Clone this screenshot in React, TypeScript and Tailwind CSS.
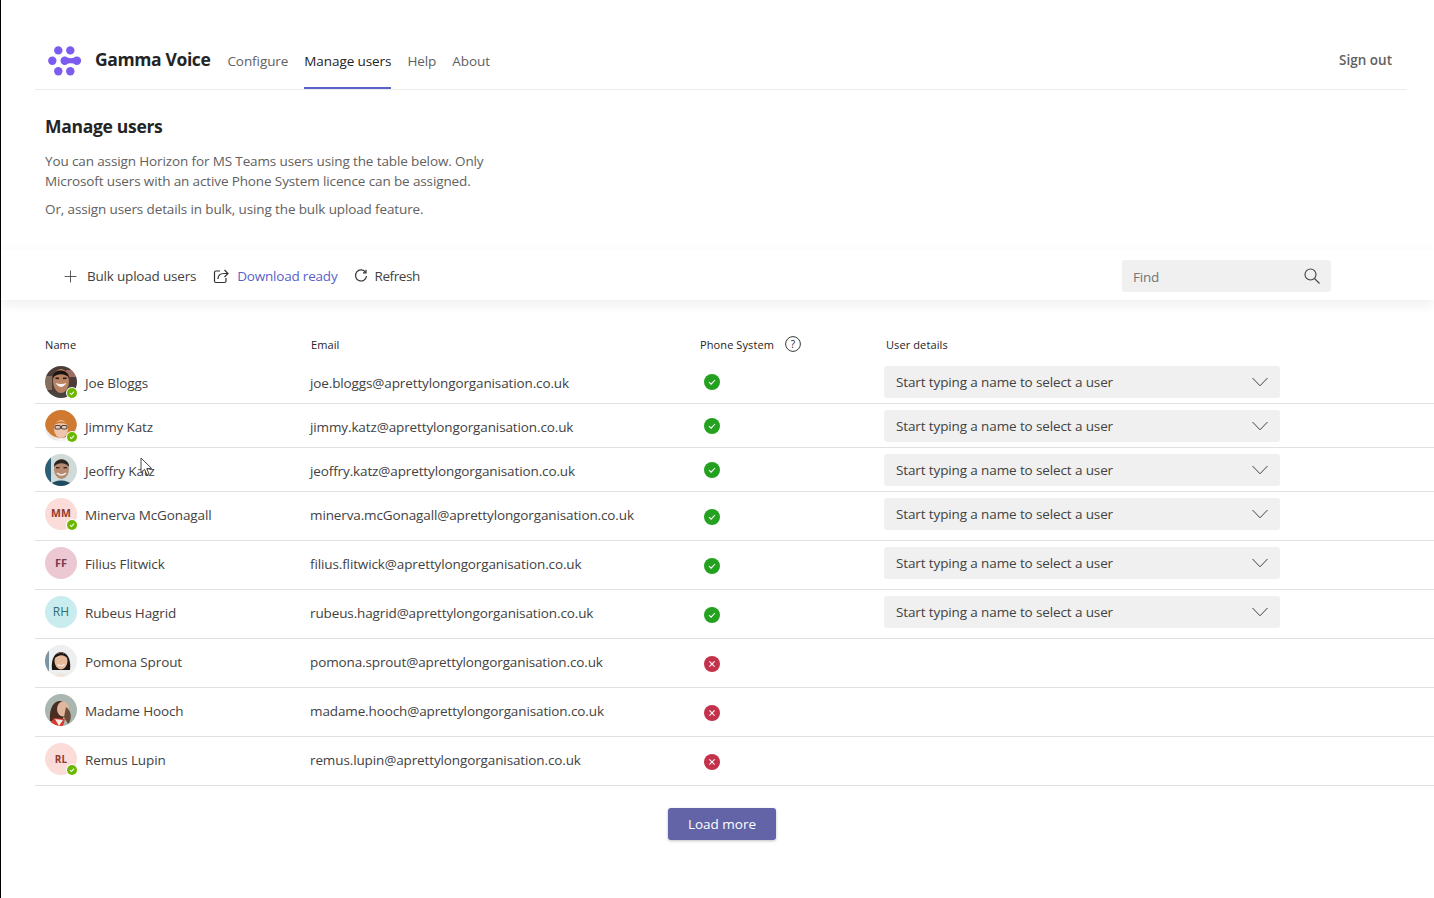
import { Plus } from "lucide-react";

type User = {
  name: string;
  email: string;
  photo?: "joe" | "jimmy" | "jeoffry" | "pomona" | "hooch";
  initials?: string;
  badge?: string;
  online?: boolean;
  licensed: boolean;
  tall?: boolean;
};

const USERS: User[] = [
  { name: "Joe Bloggs", email: "joe.bloggs@aprettylongorganisation.co.uk", photo: "joe", online: true, licensed: true },
  { name: "Jimmy Katz", email: "jimmy.katz@aprettylongorganisation.co.uk", photo: "jimmy", online: true, licensed: true },
  { name: "Jeoffry Katz", email: "jeoffry.katz@aprettylongorganisation.co.uk", photo: "jeoffry", licensed: true },
  { name: "Minerva McGonagall", email: "minerva.mcGonagall@aprettylongorganisation.co.uk", initials: "MM", badge: "bg-[#fbdcd8] text-[#8e3a35] font-bold text-[10.5px]", online: true, licensed: true, tall: true },
  { name: "Filius Flitwick", email: "filius.flitwick@aprettylongorganisation.co.uk", initials: "FF", badge: "bg-[#ecc9d2] text-[#7c3b4c] font-bold text-[11px]", licensed: true, tall: true },
  { name: "Rubeus Hagrid", email: "rubeus.hagrid@aprettylongorganisation.co.uk", initials: "RH", badge: "bg-[#c9ecef] text-[#2f6f75] text-[12px]", licensed: true, tall: true },
  { name: "Pomona Sprout", email: "pomona.sprout@aprettylongorganisation.co.uk", photo: "pomona", licensed: false, tall: true },
  { name: "Madame Hooch", email: "madame.hooch@aprettylongorganisation.co.uk", photo: "hooch", licensed: false, tall: true },
  { name: "Remus Lupin", email: "remus.lupin@aprettylongorganisation.co.uk", initials: "RL", badge: "bg-[#fbdcd8] text-[#8e3a35] font-bold text-[10px]", online: true, licensed: false, tall: true },
];

function Photo({ kind }: { kind: NonNullable<User["photo"]> }) {
  if (kind === "joe") {
    return (
      <svg viewBox="0 0 32 32" className="h-8 w-8 blur-[0.4px]">
        <rect width="32" height="32" fill="#4d3d38" />
        <rect x="21" y="4" width="10" height="7" fill="#9c6f62" />
        <rect x="0" y="10" width="7" height="14" fill="#85705f" />
        <rect y="26" width="32" height="6" fill="#4a4440" />
        <ellipse cx="16" cy="15" rx="8" ry="12" fill="#b98263" />
        <path d="M8 12 C7 2 24 2 24 12 C21 7 11 7 8 12Z" fill="#1a1311" />
        <path d="M10.5 17 Q16 25 21.5 17 Q16 19 10.5 17Z" fill="#f7f3ee" />
        <rect x="10.5" y="11.5" width="3.5" height="1.6" fill="#2a1d18" />
        <rect x="18" y="11.5" width="3.5" height="1.6" fill="#2a1d18" />
      </svg>
    );
  }
  if (kind === "jimmy") {
    return (
      <svg viewBox="0 0 32 32" className="h-8 w-8 blur-[0.4px]">
        <rect width="32" height="32" fill="#ece8e4" />
        <ellipse cx="16" cy="13" rx="16" ry="15" fill="#cf7a30" />
        <ellipse cx="16" cy="19" rx="7" ry="9" fill="#eec6ad" />
        <path d="M9 15 C11 10 21 10 23 15 C20 12.5 12 12.5 9 15Z" fill="#cf7a30" />
        <rect x="10" y="15.5" width="5.5" height="3.5" rx="1.2" fill="none" stroke="#4a4542" strokeWidth="1.1" />
        <rect x="16.5" y="15.5" width="5.5" height="3.5" rx="1.2" fill="none" stroke="#4a4542" strokeWidth="1.1" />
        <path d="M5 32 Q16 26 27 32Z" fill="#f8f6f3" />
      </svg>
    );
  }
  if (kind === "jeoffry") {
    return (
      <svg viewBox="0 0 32 32" className="h-8 w-8 blur-[0.4px]">
        <rect width="32" height="32" fill="#cfdad9" />
        <rect width="6" height="32" fill="#2f5f76" />
        <path d="M2 32 Q16 21 30 32Z" fill="#1f4a63" />
        <ellipse cx="16.5" cy="15" rx="7.5" ry="10" fill="#b58a70" />
        <path d="M9 13 C8 3 25 3 24 13 C21 8 12 8 9 13Z" fill="#2b2522" />
        <rect x="11" y="13" width="3.5" height="1.4" fill="#3a2c26" />
        <rect x="18.5" y="13" width="3.5" height="1.4" fill="#3a2c26" />
        <path d="M12 19 Q16.5 23 21 19" stroke="#f1ece6" strokeWidth="1.5" fill="none" />
      </svg>
    );
  }
  if (kind === "pomona") {
    return (
      <svg viewBox="0 0 32 32" className="h-8 w-8 blur-[0.4px]">
        <rect width="32" height="32" fill="#eef0ef" />
        <rect width="4" height="32" fill="#7c95a3" />
        <path d="M7 25 C4 1 28 1 25 25 L21 25 L11 25Z" fill="#1d1715" />
        <ellipse cx="16" cy="16" rx="6.5" ry="8.5" fill="#e6bb9c" />
        <path d="M9 14 C10 6 22 6 23 14 C19 9 14 9 9 14Z" fill="#1d1715" />
        <path d="M12.5 19.5 Q16 22 19.5 19.5" stroke="#f6f0ea" strokeWidth="1.2" fill="none" />
        <path d="M7 32 Q16 24 25 32Z" fill="#efe6dd" />
      </svg>
    );
  }
  return (
    <svg viewBox="0 0 32 32" className="h-8 w-8 blur-[0.4px]">
      <rect width="32" height="32" fill="#a9b7b0" />
      <path d="M5 27 C3 5 19 2 22 14 L17 27Z" fill="#4a2d22" />
      <ellipse cx="18" cy="15" rx="6" ry="7.5" fill="#e0b79c" />
      <path d="M21 13 C27 17 27 26 23 30 L19 23Z" fill="#6a4a38" />
      <path d="M3 32 L9 24 L20 25 L18 32Z" fill="#d8392f" />
      <path d="M10 25 L14 32 L18 26Z" fill="#f2ece6" />
    </svg>
  );
}

function Avatar({ user }: { user: User }) {
  return (
    <div className="relative h-8 w-8 shrink-0">
      {user.photo ? (
        <div className="h-8 w-8 overflow-hidden rounded-full">
          <Photo kind={user.photo} />
        </div>
      ) : (
        <div className={`flex h-8 w-8 items-center justify-center rounded-full tracking-normal ${user.badge}`}>
          {user.initials}
        </div>
      )}
      {user.online && (
        <div className="absolute bottom-0 right-0 flex h-[10px] w-[10px] items-center justify-center rounded-full bg-[#6bb700] ring-1 ring-white">
          <svg viewBox="0 0 10 10" className="h-2 w-2">
            <path d="M2.5 5.2 L4.3 7 L7.6 3.4" stroke="#fff" strokeWidth="1.3" fill="none" />
          </svg>
        </div>
      )}
    </div>
  );
}

function Status({ ok }: { ok: boolean }) {
  return (
    <svg viewBox="0 0 16 16" className="h-4 w-4">
      <circle cx="8" cy="8" r="8" fill={ok ? "#23a11f" : "#c4314b"} />
      {ok ? (
        <path d="M5 8.2 L7.1 10.2 L11 6" stroke="#fff" strokeWidth="1.1" fill="none" />
      ) : (
        <path d="M5.4 5.4 L10.6 10.6 M10.6 5.4 L5.4 10.6" stroke="#fff" strokeWidth="1.1" fill="none" />
      )}
    </svg>
  );
}

function Logo() {
  return (
    <svg viewBox="0 0 34 30" className="h-[30px] w-[34px]">
      <g fill="#7c5cf0">
        <circle cx="10.3" cy="4.4" r="4.2" />
        <circle cx="22.3" cy="4.4" r="4.2" />
        <circle cx="4.3" cy="14.7" r="4.2" />
        <circle cx="16.7" cy="14.7" r="4.2" />
        <circle cx="28.9" cy="14.7" r="4.2" />
        <path d="M16.7 10.8 Q22.8 13.6 28.9 10.8 L28.9 18.6 Q22.8 15.8 16.7 18.6Z" />
        <circle cx="10.3" cy="25.2" r="4.2" />
        <circle cx="22.3" cy="25.2" r="4.2" />
      </g>
    </svg>
  );
}

export default function App() {
  return (
    <div
      className="relative h-[898px] w-[1434px] overflow-hidden border-l border-black bg-white text-[14px] text-[#242424]"
      style={{ fontFamily: '"Open Sans", "Noto Sans", sans-serif' }}
    >
      {/* header */}
      <div className="pl-[34px] pr-[27px] pt-[32px]">
        <div className="flex h-[58px] items-center border-b border-[#ebebeb]">
          <div className="ml-[13px] mr-[13px]">
            <Logo />
          </div>
          <span className="pb-[2px] text-[17.5px] font-bold tracking-[-0.38px] text-[#242424]">Gamma Voice</span>
          <nav className="ml-[17px] flex h-full gap-4 text-[13.5px] tracking-[-0.08px] text-[#616161]">
            <span className="flex items-center pt-[1px]">Configure</span>
            <span className="flex items-center border-b-2 border-[#5b5fc7] pt-[3px] text-[#242424]">Manage users</span>
            <span className="flex items-center pt-[1px]">Help</span>
            <span className="flex items-center pt-[1px]">About</span>
          </nav>
          <span className="ml-auto mr-[15px] text-[13.5px] font-semibold text-[#616161]">Sign out</span>
        </div>
      </div>

      {/* intro */}
      <div className="h-[160px] pl-[44px] pt-[24px]">
        <h1 className="text-[17.5px] font-bold leading-6 tracking-[-0.3px]">Manage users</h1>
        <p className="mt-[13px] w-[470px] text-[13.5px] leading-5 tracking-[-0.125px] text-[#616161]">
          You can assign Horizon for MS Teams users using the table below. Only Microsoft users with an active Phone System licence can be assigned.
        </p>
        <p className="mt-2 text-[13.5px] leading-5 tracking-[-0.125px] text-[#616161]">
          Or, assign users details in bulk, using the bulk upload feature.
        </p>
      </div>

      {/* toolbar */}
      <div className="flex h-[50px] items-center pl-[60px] pt-[2px] text-[13.5px] tracking-[-0.2px] text-[#424242] shadow-[0_4px_12px_rgba(0,0,0,0.07)]">
        <Plus className="h-[19px] w-[19px]" strokeWidth={1.1} />
        <span className="ml-[7px]">Bulk upload users</span>
        <svg viewBox="0 0 16 16" className="ml-[17px] h-4 w-4 fill-none stroke-[#333333]" strokeWidth="1.2">
          <path d="M7 3 H3 A1.5 1.5 0 0 0 1.5 4.5 V13 A1.5 1.5 0 0 0 3 14.5 H11.5 A1.5 1.5 0 0 0 13 13 V10" />
          <path d="M5 11 C5 7.5 7.5 5.5 11 5.5 H14.5 M11.5 2 L15 5.5 L11.5 9" />
        </svg>
        <span className="ml-[8px] text-[#5b5fc7]">Download ready</span>
        <svg viewBox="0 0 14 14" className="ml-[17px] h-[14px] w-[14px] fill-none stroke-[#333333]" strokeWidth="1.2">
          <path d="M11.6 3.4 A5.5 5.5 0 1 0 12.5 7" />
          <path d="M12 0.8 V3.8 H9" />
        </svg>
        <span className="ml-[6px] tracking-[-0.4px]">Refresh</span>
        <div className="ml-[702px] flex h-8 w-[209px] items-center justify-between rounded-[3px] bg-[#f0f0f0] pl-[11px] pr-[11px] text-[#757575]">
          <span className="pt-[2px]">Find</span>
          <svg viewBox="0 0 16 16" className="h-4 w-4 fill-none stroke-[#424242]" strokeWidth="1.1">
            <circle cx="6.5" cy="6.5" r="5.5" />
            <path d="M10.5 10.5 L15.5 15.5" />
          </svg>
        </div>
      </div>

      {/* table */}
      <div className="ml-[34px] mt-[36px] text-[13.5px] tracking-[-0.12px]">
        <div className="grid h-[18px] grid-cols-[275px_390px_185px_1fr] items-center text-[11px] tracking-[0.1px]">
          <span className="pl-[10px]">Name</span>
          <span className="pl-px">Email</span>
          <span className="flex items-center gap-[11px]">
            Phone System
            <svg viewBox="0 0 16 16" className="mb-[2px] h-4 w-4">
              <circle cx="8" cy="8" r="7.4" stroke="#242424" strokeWidth="0.9" fill="none" />
              <text x="8" y="11.5" textAnchor="middle" fontSize="10" fill="#242424">?</text>
            </svg>
          </span>
          <span className="pl-px">User details</span>
        </div>
        <div className="mt-[6px]">
          {USERS.map((user) => (
            <div
              key={user.name}
              className={`grid grid-cols-[275px_390px_185px_1fr] items-start border-b border-[#e0e0e0] pt-[6px] ${user.tall ? "h-[49px]" : "h-11"}`}
            >
              <div className="flex items-center gap-2 pl-[10px]">
                <Avatar user={user} />
                <span className="pt-[2px] text-[#424242]">{user.name}</span>
              </div>
              <span className="flex h-8 items-center pt-[2px] text-[#424242]">{user.email}</span>
              <div className={`pl-[4px] ${user.tall ? "pt-[11px]" : "pt-2"}`}>
                <Status ok={user.licensed} />
              </div>
              {user.licensed && (
                <div className="-ml-px flex h-8 w-[396px] items-center justify-between rounded-[3px] bg-[#f0f0f0] pl-[12px] pr-[12px] text-[#424242]">
                  <span>Start typing a name to select a user</span>
                  <svg viewBox="0 0 16 10" className="h-[10px] w-4 fill-none stroke-[#424242]" strokeWidth="1">
                    <path d="M0.5 1 L8 8.8 L15.5 1" />
                  </svg>
                </div>
              )}
            </div>
          ))}
        </div>
      </div>

      <div className="mt-[22px] flex justify-center pl-[9px]">
        <button
          type="button"
          className="h-8 w-[108px] rounded-[3px] bg-[#6264a7] text-[13.5px] font-medium text-white shadow-[0_1px_3px_rgba(0,0,0,0.25)]"
        >
          Load more
        </button>
      </div>

      {/* mouse pointer */}
      <svg viewBox="0 0 14 20" className="absolute left-[139px] top-[457px] h-5 w-[14px]">
        <path d="M1 1 L1 15.5 L4.6 12.4 L7 18 L9 17 L6.8 11.6 L11.6 11.4 Z" fill="#fff" stroke="#333" strokeWidth="0.9" />
      </svg>
    </div>
  );
}
